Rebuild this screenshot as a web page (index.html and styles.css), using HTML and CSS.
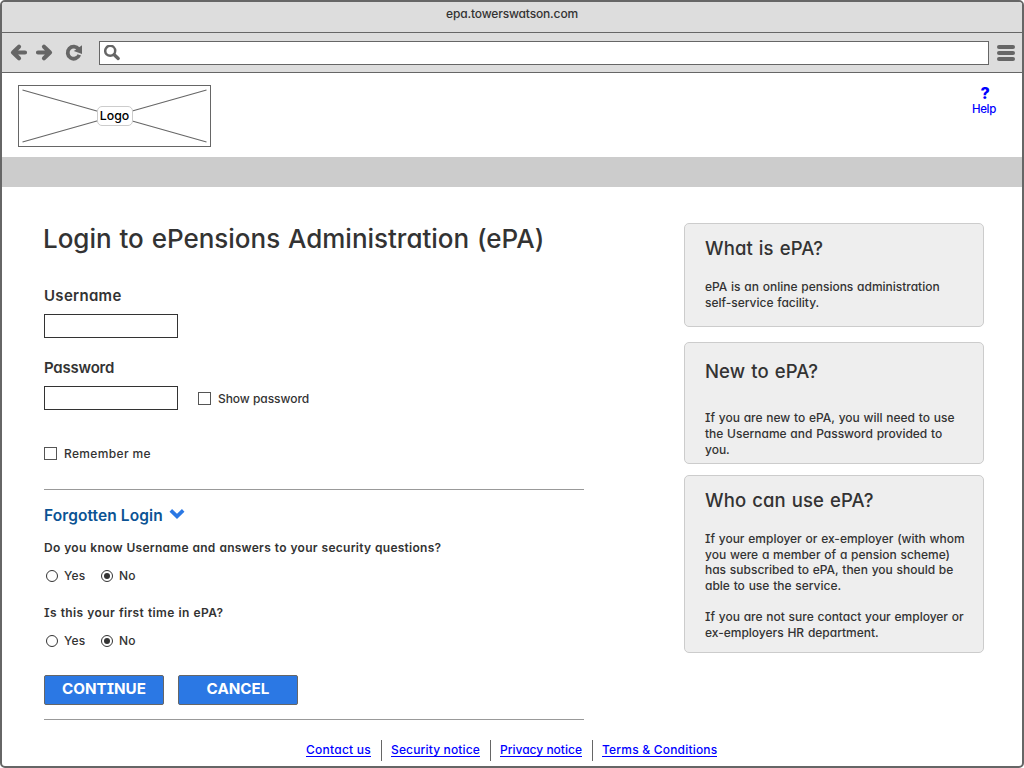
FILE: index.html
```html
<!DOCTYPE html>
<html lang="en">
<head>
<meta charset="utf-8">
<title>Login to ePensions Administration (ePA)</title>
<link rel="stylesheet" href="styles.css">
</head>
<body>
<div class="window">
  <div class="titlebar"><span class="url">epa.towerswatson.com</span></div>
  <div class="toolbar">
    <svg class="nav-icons" width="96" height="38" viewBox="0 0 96 38" fill="none" stroke="#666">
      <g stroke-width="4.2" stroke-linecap="round" stroke-linejoin="round">
        <path d="M17 12.8 L11 18.5 L17 24.2 M12 18.5 H23"/>
        <path d="M42 12.8 L48 18.5 L42 24.2 M47 18.5 H36"/>
      </g>
      <path d="M76.6 15.2 A6 6 0 1 0 77.3 20.9" stroke-width="3.8"/>
      <path d="M80 11.2 V20 L71.8 17 Z" fill="#666" stroke="none"/>
    </svg>
    <div class="address">
      <svg width="18" height="18" viewBox="0 0 18 18" fill="none" stroke="#666">
        <circle cx="6.2" cy="5.8" r="5" stroke-width="2.5"/>
        <path d="M10.2 9.7 L14.2 13.4" stroke-width="3.4" stroke-linecap="round"/>
      </svg>
    </div>
    <div class="menu"><i></i><i></i><i></i></div>
  </div>
  <header class="header">
    <div class="logo">
      <svg width="191" height="60" viewBox="0 0 191 60" stroke="#666" stroke-width="1.1">
        <path d="M3.5 4 L187.5 56 M3.5 56 L187.5 4"/>
      </svg>
      <span class="logo-text">Logo</span>
    </div>
    <a class="help"><b>?</b><span>Help</span></a>
  </header>
  <div class="band"></div>
  <div class="content">
    <main class="login">
      <h1>Login to ePensions Administration (ePA)</h1>
      <label class="field-label username">Username</label>
      <div class="row"><input class="text-input" type="text"></div>
      <label class="field-label password">Password</label>
      <div class="row">
        <input class="text-input" type="password">
        <label class="check show"><i class="box"></i><span>Show password</span></label>
      </div>
      <label class="check remember"><i class="box"></i><span>Remember me</span></label>
      <section class="forgotten">
        <h2><span>Forgotten Login</span>
          <svg width="16" height="12" viewBox="0 0 16 12"><path d="M1.8 2.4 L8 8.4 L14.2 2.4" fill="none" stroke="#2b78e4" stroke-width="3.6"/></svg>
        </h2>
        <p class="question q1">Do you know Username and answers to your security questions?</p>
        <div class="options">
          <label><i class="radio"></i><span>Yes</span></label>
          <label><i class="radio on"></i><span>No</span></label>
        </div>
        <p class="question q2">Is this your first time in ePA?</p>
        <div class="options">
          <label><i class="radio"></i><span>Yes</span></label>
          <label><i class="radio on"></i><span>No</span></label>
        </div>
        <div class="actions">
          <button class="continue">CONTINUE</button>
          <button class="cancel">CANCEL</button>
        </div>
      </section>
    </main>
    <aside class="side">
      <section class="card what">
        <h3>What is ePA?</h3>
        <p>ePA is an online pensions administration<br>self-service facility.</p>
      </section>
      <section class="card new">
        <h3>New to ePA?</h3>
        <p>If you are new to ePA, you will need to use<br>the Username and Password provided to<br>you.</p>
      </section>
      <section class="card who">
        <h3>Who can use ePA?</h3>
        <p>If your employer or ex-employer (with whom<br>you were a member of a pension scheme)<br>has subscribed to ePA, then you should be<br>able to use the service.</p>
        <p>If you are not sure contact your employer or<br>ex-employers HR department.</p>
      </section>
    </aside>
  </div>
  <footer class="footer">
    <a class="contact">Contact us</a><a class="security">Security notice</a><a class="privacy">Privacy notice</a><a class="terms">Terms &amp; Conditions</a>
  </footer>
</div>
</body>
</html>
```
FILE: styles.css
```css
* { box-sizing: border-box; }
body {
  margin: 0;
  background: #fff;
  color: #333;
  font: 450 12px/16px Inter, "Open Sans", sans-serif;
  font-feature-settings: "cv11", "cv08";
  white-space: nowrap;
}
h1, h2, h3, p { margin: 0; font-weight: 450; }
.window {
  display: flex;
  flex-direction: column;
  width: 1024px;
  height: 768px;
  border: 2px solid #666;
  border-radius: 5px;
  overflow: hidden;
}
.titlebar {
  height: 31px;
  padding-top: 4px;
  background: #ddd;
  border-bottom: 1px solid #666;
  text-align: center;
}
.url { font-weight: 500; letter-spacing: -0.15px; }
.toolbar {
  display: flex;
  align-items: center;
  height: 40px;
  background: #ddd;
  border-bottom: 1px solid #666;
}
.address {
  width: 890px;
  height: 24px;
  padding: 3px 4px;
  margin-left: 1px;
  border: 1px solid #666;
  background: #fff;
}
.address svg { display: block; }
.menu {
  display: flex;
  flex-direction: column;
  gap: 2px;
  margin-left: 8px;
}
.menu i { width: 18px; height: 4px; border-radius: 2px; background: #666; }
.header {
  display: flex;
  justify-content: space-between;
  height: 84px;
  padding: 12px 26px 0 16px;
}
.logo {
  display: grid;
  place-items: center;
  width: 193px;
  height: 62px;
  border: 1px solid #666;
}
.logo > * { grid-area: 1 / 1; }
.logo-text {
  width: 36px;
  height: 20px;
  border: 1px solid #ccc;
  border-radius: 5px;
  background: #fff;
  color: #000;
  font-size: 12.3px;
  font-weight: 500;
  line-height: 18px;
  text-align: center;
}
.help {
  display: flex;
  flex-direction: column;
  align-items: center;
  color: #00f;
  font-size: 11.5px;
  letter-spacing: -0.3px;
}
.help b { font-size: 16px; font-weight: 800; padding-left: 2px; }
.band { flex: none; height: 30px; background: #ccc; }
.content { display: flex; height: 533px; padding: 36px 38px 0 42px; justify-content: space-between; }
.login { width: 540px; }
h1 { font-size: 26px; line-height: 32px; letter-spacing: -0.02px; word-spacing: 1px; margin-left: -1px; }
.field-label { display: block; font-size: 15px; font-weight: 600; line-height: 20px; }
.username { margin-top: 31px; letter-spacing: 0.3px; }
.password { margin-top: 20px; letter-spacing: -0.22px; }
.row { display: flex; align-items: center; margin-top: 8px; height: 24px; }
.text-input { width: 134px; height: 24px; padding: 0 4px; border: 1px solid #333; background: #fff; }
.check { display: flex; align-items: center; gap: 7px; }
.check span { padding-top: 1px; }
.box { width: 13px; height: 13px; border: 1px solid #555; }
.show { margin-left: 20px; letter-spacing: -0.05px; }
.remember { margin-top: 35px; height: 16px; letter-spacing: 0.35px; }
.forgotten {
  height: 231px;
  margin-top: 28px;
  padding-top: 15px;
  border-top: 1px solid #999;
  border-bottom: 1px solid #999;
}
.forgotten h2 {
  display: flex;
  align-items: center;
  gap: 7px;
  color: #0b5394;
  font-size: 15.5px;
  font-weight: 600;
  line-height: 21px;
  letter-spacing: 0.1px;
}
.forgotten h2 svg { margin: 0 0 3px -1px; }
.question { font-size: 12px; font-weight: 600; }
.q1 { margin-top: 14px; letter-spacing: 0.26px; word-spacing: 0.5px; }
.q2 { margin-top: 21px; letter-spacing: 0.35px; word-spacing: 0.5px; }
.options { display: flex; padding-left: 2px; margin-top: 12px; height: 16px; }
.options label { display: flex; align-items: center; width: 55px; gap: 6px; letter-spacing: 0.15px; }
.radio { display: grid; place-items: center; width: 12px; height: 12px; margin-bottom: 1px; border: 1px solid #333; border-radius: 50%; }
.radio.on::before { content: ""; width: 6px; height: 6px; border-radius: 50%; background: #333; }
.actions { display: flex; gap: 14px; margin-top: 26px; }
.actions button {
  width: 120px;
  height: 30px;
  padding: 0 0 2px;
  border: 1px solid #666;
  border-radius: 2px;
  background: #2b78e4;
  color: #fff;
  font: inherit;
  font-size: 15.2px;
  font-weight: 700;
  font-feature-settings: inherit;
}
.side { width: 300px; }
.card {
  padding: 14px 0 0 20px;
  background: #eee;
  border: 1px solid #ccc;
  border-radius: 5px;
}
.card h3 { font-size: 18.5px; line-height: 21px; letter-spacing: 0.1px; word-spacing: 1px; }
.card p { margin-top: 20px; letter-spacing: -0.01px; word-spacing: 0.6px; }
.what { height: 104px; }
.new { height: 122px; margin-top: 15px; padding-top: 18px; }
.new p { margin-top: 28px; }
.who { height: 178px; margin-top: 11px; }
.who p { line-height: 15.7px; }
.who p + p { margin-top: 15px; }
.footer { display: flex; height: 21px; margin-top: 20px; padding-left: 304px; }
.footer a { position: relative; height: 17px; color: #00f; line-height: 19px; border-bottom: 1px solid #00f; }
.footer a + a { margin-left: 20px; }
.footer a + a::before { content: ""; position: absolute; left: -10px; top: 0; width: 1px; height: 21px; background: #666; }
.contact { width: 65px; letter-spacing: 0.25px; }
.security { width: 89px; letter-spacing: 0.15px; }
.privacy { width: 82px; }
.terms { width: 115px; letter-spacing: 0.2px; }
```
